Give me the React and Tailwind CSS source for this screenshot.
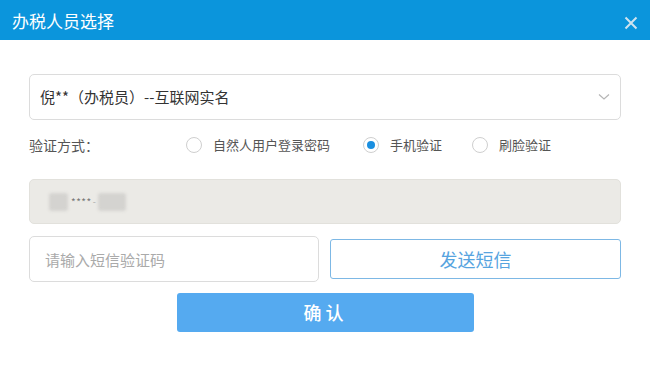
import React, { useState } from 'react';

const font = { fontFamily: '"Noto Sans CJK SC", "Liberation Sans", sans-serif' };

function Radio({ checked, label, onClick, className }) {
  return (
    <label onClick={onClick} className={`flex items-center cursor-pointer ${className || ''}`}>
      <span className="w-[16px] h-[16px] rounded-full border border-[#cfcfcf] bg-white flex items-center justify-center">
        {checked && <span className="w-[8px] h-[8px] rounded-full bg-[#1a8fe0]" />}
      </span>
      <span className="ml-[11px] text-[13px] text-[#555]">{label}</span>
    </label>
  );
}

export default function App() {
  const [method, setMethod] = useState('phone');
  const [code, setCode] = useState('');

  return (
    <div className="w-[650px] h-[382px] bg-white overflow-hidden" style={font}>
      <div className="h-[40px] bg-[#0b95dc] flex items-center justify-between pl-[12px] pr-[12px]">
        <span className="text-white text-[17px] leading-none">办税人员选择</span>
        <svg width="14" height="14" viewBox="0 0 14 14" className="mt-[6px]">
          <path d="M1.5 1.5 L12.5 12.5 M12.5 1.5 L1.5 12.5" stroke="#cfe3ef" strokeWidth="2" />
        </svg>
      </div>

      <div className="px-[29px] pt-[34px] flex flex-col">
        <div className="h-[46px] border border-[#dcdcdc] rounded-[5px] flex items-center justify-between pl-[10px] pr-[10px]">
          <span className="text-[15px] text-[#333]">倪**（办税员）--互联网实名</span>
          <svg width="12" height="8" viewBox="0 0 12 8">
            <path d="M1 1.5 L6 6 L11 1.5" stroke="#b5b5b5" strokeWidth="1.2" fill="none" />
          </svg>
        </div>

        <div className="flex items-center h-[24px] mt-[13px]">
          <span className="text-[14px] text-[#555] w-[157px]">验证方式：</span>
          <Radio label="自然人用户登录密码" checked={method === 'pwd'} onClick={() => setMethod('pwd')} />
          <Radio className="ml-[33px]" label="手机验证" checked={method === 'phone'} onClick={() => setMethod('phone')} />
          <Radio className="ml-[30px]" label="刷脸验证" checked={method === 'face'} onClick={() => setMethod('face')} />
        </div>

        <div className="h-[45px] mt-[22px] bg-[#ebeae6] border border-[#e2e1dc] rounded-[5px] flex items-center pl-[19px]">
          <span className="w-[19px] h-[18px] bg-[#d4d3d0] rounded-[3px] blur-[1.5px]" />
          <span className="text-[10px] text-[#777] ml-[3px] tracking-[0.5px]">****</span>
          <span className="text-[9px] text-[#aaa] ml-[1px]">-</span>
          <span className="w-[28px] h-[18px] bg-[#d4d3d0] rounded-[3px] blur-[1.5px] ml-[2px]" />
        </div>

        <div className="flex mt-[12px] items-center">
          <input
            value={code}
            onChange={(e) => setCode(e.target.value)}
            placeholder="请输入短信验证码"
            className="w-[291px] h-[46px] border border-[#dcdcdc] rounded-[5px] px-[15px] text-[15px] text-[#333] placeholder:text-[#aaa] outline-none"
            style={font}
          />
          <button className="ml-[11px] w-[292px] h-[40px] border border-[#7db8e5] rounded-[3px] text-[18px] text-[#57a4df] bg-white">
            发送短信
          </button>
        </div>

        <div className="flex justify-center mt-[11px]">
          <button className="w-[297px] h-[39px] ml-[1px] bg-[#55aaf0] rounded-[3px] text-white text-[18px] tracking-[4px] font-medium">
            确认
          </button>
        </div>
      </div>
    </div>
  );
}
